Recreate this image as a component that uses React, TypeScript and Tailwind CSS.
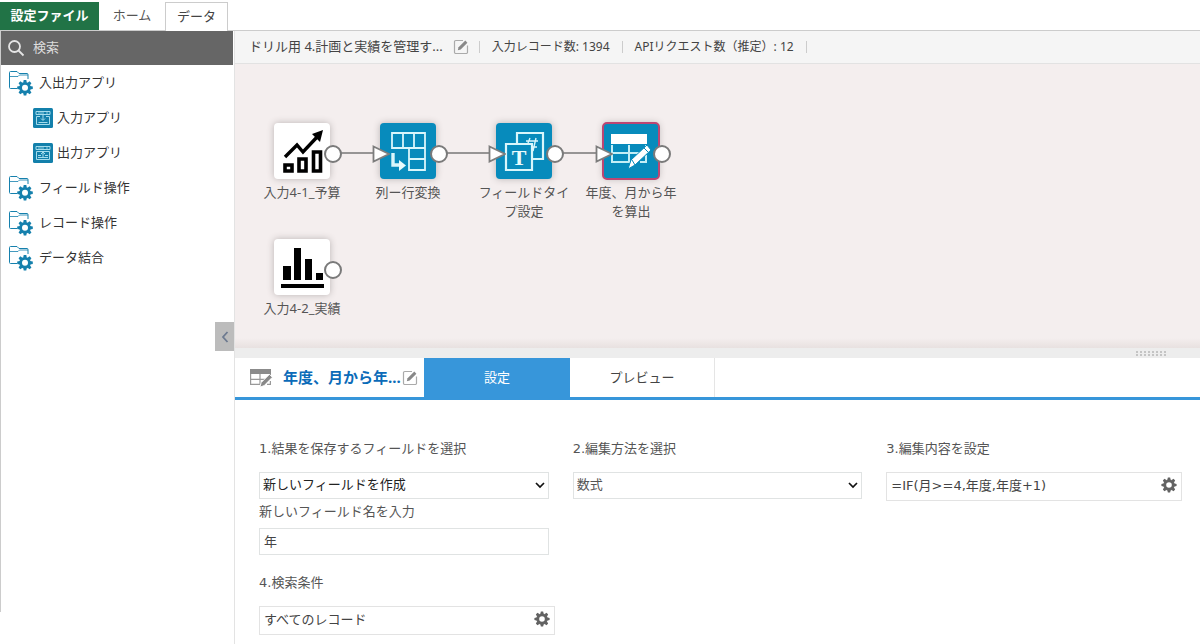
import { useState } from 'react';
import type { ReactNode } from 'react';

const TEETH = [0, 45, 90, 135, 180, 225, 270, 315];

function Gear({ className }: { className?: string }) {
  return (
    <svg viewBox="0 0 16 16" className={className} fill="currentColor" aria-hidden="true">
      {TEETH.map((angle) => (
        <path key={angle} d="M6.2 3.2 L6.9 0.4 H9.1 L9.800 3.2 Z" transform={`rotate(${angle} 8 8)`} />
      ))}
      <circle cx="8" cy="8" r="4.2" fill="none" stroke="currentColor" strokeWidth="2.800" />
    </svg>
  );
}

function FolderIcon() {
  return (
    <svg viewBox="0 0 24 26" className="h-[26px] w-6 shrink-0 text-[#1580ad]" fill="none" stroke="currentColor" aria-hidden="true">
      <path d="M8 18.500H1.500a1 1 0 0 1-1-1V2.500a1 1 0 0 1 1-1H8l2 2h8a1 1 0 0 1 1 1V9" />
      <path d="M0.500 6.500H9l1.500-1.500H19" strokeWidth="0.8" />
      <g transform="translate(8.2 10)" fill="currentColor" stroke="none">
        {TEETH.map((angle) => (
          <path key={angle} d="M6 2.8 L6.500 0 H9.100 L9.600 2.8 Z" transform={`rotate(${angle} 7.8 7.8)`} />
        ))}
        <circle cx="7.8" cy="7.8" r="4.400" fill="none" stroke="currentColor" strokeWidth="2.800" />
      </g>
    </svg>
  );
}

function AppIcon({ output }: { output?: boolean }) {
  return (
    <svg viewBox="0 0 20 20" className="size-5 shrink-0" aria-hidden="true">
      <rect width="20" height="20" rx="1.500" fill="#1380ab" />
      <g fill="none" stroke="#a5dcec">
        <path d="M3 3.500h14v3H3z" />
        <path d="M5 5h6M13 5h2" strokeWidth="0.8" />
        {output ? (
          <>
            <path d="M3.500 8.500h13v8h-13z" />
            <path d="M10 14V9M8 11l2-2 2 2M5 12.500h3M12 12.500h3M5 14.500h10" />
          </>
        ) : (
          <>
            <path d="M7 8.500H3.500v8h13v-8H13" />
            <path d="M10 7v5M8 10.500l2 2 2-2M5.500 14.500h9" />
          </>
        )}
      </g>
    </svg>
  );
}

function EditIcon() {
  return (
    <svg viewBox="0 0 16 16" className="size-4" fill="none" aria-hidden="true">
      <path d="M10 1.500H2.800a1.300 1.300 0 0 0-1.300 1.300v10.400a1.300 1.300 0 0 0 1.300 1.300h10.400a1.300 1.300 0 0 0 1.300-1.300V6.500" stroke="#aaa" strokeWidth="1.200" />
      <path d="M4.800 11.200l.8-2.900L12.300 1.600l2.100 2.100-6.700 6.700z" fill="#888" />
    </svg>
  );
}

function TablePencilIcon({ className }: { className?: string }) {
  return (
    <svg viewBox="0 0 24 20" className={className} aria-hidden="true">
      <path d="M1 1h21v5H1z" fill="#8b8b8b" />
      <path d="M1.600 6v10.400H11M1.600 11.400H16M11 6v10M21.400 6v2.500M18 16.400h3.400V13" stroke="#999" strokeWidth="1.200" fill="none" />
      <path d="M11 19l1.200-4.400L20.400 6.400l2.900 2.900-8.100 8.300z" fill="#888" stroke="#fff" strokeWidth="0.8" />
    </svg>
  );
}

const growthArt = (
  <g fill="none" stroke="#000">
    <path d="M11 34L23 22l6 7L44 13" strokeWidth="3.400" />
    <path d="M49 7l-3 12-8-8z" fill="#000" stroke="none" />
    <path d="M11 42h7v6h-7zM25 36h7v12h-7zM39.500 29h7v19h-7z" strokeWidth="3.600" />
  </g>
);

const barsArt = (
  <g fill="#000">
    <path d="M9 27h8v14H9zM20 9h7v32h-7zM31 20h7v21h-7zM42 34h7v7h-7zM7 45h43v4H7z" />
  </g>
);

const pivotArt = (
  <g fill="none" stroke="#d9f6fb" strokeWidth="1.800">
    <path d="M12 10h33v37H29V25H12zM23 10v15M34 10v15M29 25h16M29 36h16" />
    <path d="M13 30v12h8" strokeWidth="3.400" />
    <path d="M19 37l7 5.500-7 5.500z" fill="#e8fbfd" stroke="none" />
  </g>
);

const typeArt = (
  <g fill="none" stroke="#d9f6fb" strokeWidth="2.200">
    <path d="M21 20V10h26v26H37" />
    <path d="M10 21h26v26H10z" />
    <path d="M34 15l-2 5M40 15l-3 13M30 18h12M37 24h4" strokeWidth="1.400" />
    <text x="23" y="42" textAnchor="middle" fontSize="22" fontWeight="700" fill="#e8fbfd" stroke="none" className="font-['Liberation_Serif',serif]">
      T
    </text>
  </g>
);

const editTableArt = (
  <g fill="none" stroke="#c4eef6" strokeWidth="2">
    <path d="M8 11h36v10H8z" fill="#fff" stroke="none" />
    <path d="M9 22v17h18M9 30h29M26 22v17M43 22v3M37 39h6v-7" />
    <path d="M25 46l3-9 16-15 4 5-16 15z" fill="#fff" stroke="#078bbc" strokeWidth="1" />
    <path d="M29 37l3 5M41 25l4 4" stroke="#078bbc" strokeWidth="1" />
  </g>
);

interface FlowNode {
  label: string;
  place: string;
  tile: string;
  art: ReactNode;
  hasInput?: boolean;
}

const nodes: FlowNode[] = [
  { label: '入力4-1_予算', place: 'left-[19px] top-[59px]', tile: 'bg-white', art: growthArt },
  { label: '列ー行変換', place: 'left-[125px] top-[59px]', tile: 'bg-[#078bbc]', art: pivotArt, hasInput: true },
  { label: 'フィールドタイプ設定', place: 'left-[241px] top-[59px]', tile: 'bg-[#078bbc]', art: typeArt, hasInput: true },
  {
    label: '年度、月から年を算出',
    place: 'left-[348px] top-[59px]',
    tile: 'bg-[#078bbc] outline-2 -outline-offset-1 outline-[#bd4672]',
    art: editTableArt,
    hasInput: true,
  },
  { label: '入力4-2_実績', place: 'left-[19px] top-[175px]', tile: 'bg-white', art: barsArt },
];

function CanvasNode({ label, place, tile, art, hasInput }: FlowNode) {
  return (
    <div className={`absolute flex w-24 flex-col items-center ${place}`}>
      <button type="button" aria-label={label} className={`relative size-14 rounded-sm shadow-[0_0_7px_#b9b3b3] ${tile}`}>
        <svg viewBox="0 0 56 56" className="size-14">
          {art}
        </svg>
        {hasInput && (
          <svg viewBox="0 0 18 18" className="absolute top-[22px] -left-2 size-[18px]">
            <path d="M1.500 1.500L17 9 1.500 16.500z" fill="#fff" stroke="#7d7d7d" strokeWidth="1.800" />
          </svg>
        )}
        <span className="absolute top-[22px] -right-3 size-[18px] rounded-full border-2 border-[#7a7a7a] bg-white" />
      </button>
      <span className="mt-1 px-px text-center leading-[19px] text-[#555]">{label}</span>
    </div>
  );
}

const tree = [
  { label: '入出力アプリ', kind: 'folder' },
  { label: '入力アプリ', kind: 'input' },
  { label: '出力アプリ', kind: 'output' },
  { label: 'フィールド操作', kind: 'folder' },
  { label: 'レコード操作', kind: 'folder' },
  { label: 'データ結合', kind: 'folder' },
];

function Sidebar() {
  return (
    <aside className="relative flex w-[235px] shrink-0 border-r border-[#e3e3e3]">
      <div className="mb-8 flex-1 border-l border-[#ccc]">
        <label className="mr-px flex h-[34px] items-center bg-[#666] text-[#ddd]">
          <svg viewBox="0 0 18 18" className="ml-1.5 size-[18px]" fill="none" stroke="#e5e5e5" strokeWidth="1.800" aria-hidden="true">
            <circle cx="7.500" cy="7.500" r="5.500" />
            <path d="M11.500 11.500l5 5" />
          </svg>
          <input type="text" aria-label="検索" placeholder="検索" className="ml-2 w-40 bg-transparent outline-none placeholder:text-[#ddd]" />
        </label>
        <ul>
          {tree.map(({ label, kind }) => (
            <li key={label}>
              <button
                type="button"
                className={`flex h-[35px] w-full items-center text-[#333] ${kind === 'folder' ? 'gap-1.5 pl-2' : 'gap-1 pl-8'}`}
              >
                {kind === 'folder' ? <FolderIcon /> : <AppIcon output={kind === 'output'} />}
                {label}
              </button>
            </li>
          ))}
        </ul>
      </div>
      <button type="button" aria-label="閉じる" className="absolute top-[291px] right-0 flex h-[29px] w-[19px] items-center justify-center bg-[#bcbcbc]">
        <svg viewBox="0 0 8 12" className="h-3 w-2" fill="none" stroke="#6d7a90" strokeWidth="1.800">
          <path d="M6.500 1L2 6l4.500 5" />
        </svg>
      </button>
    </aside>
  );
}

function SelectField({ id, label, options, tone }: { id: string; label: string; options: string[]; tone: string }) {
  return (
    <div className="pr-6">
      <label htmlFor={id} className="block leading-5">{label}</label>
      <div className="relative mt-[13px]">
        <select id={id} className={`h-[27px] w-full appearance-none border border-[#e0e3e3] bg-white pb-0.5 pl-[3px] outline-none ${tone}`}>
          {options.map((option) => (
            <option key={option}>{option}</option>
          ))}
        </select>
        <svg viewBox="0 0 10 7" className="pointer-events-none absolute top-2.5 right-1 h-[7px] w-2.5" fill="none" stroke="#111" strokeWidth="1.700">
          <path d="M1 1l4 4 4-4" />
        </svg>
      </div>
    </div>
  );
}

function GearField({ id, label, value, onChange }: { id: string; label: string; value: string; onChange: (value: string) => void }) {
  return (
    <div className="pr-[18px]">
      <label htmlFor={id} className="block leading-5">{label}</label>
      <div className="mt-[13px] flex h-[29px] items-center border border-[#e3e3e3] pr-1 pb-0.5">
        <input
          id={id}
          type="text"
          value={value}
          onChange={(e) => onChange(e.target.value)}
          className="min-w-0 flex-1 pl-1 text-[#444] outline-none"
        />
        <button type="button" aria-label="設定を開く" className="mb-0.5 text-[#636363]">
          <Gear className="size-4" />
        </button>
      </div>
    </div>
  );
}

function SettingsForm() {
  const [fieldName, setFieldName] = useState('年');
  const [formula, setFormula] = useState('=IF(月>=4,年度,年度+1)');
  const [condition, setCondition] = useState('すべてのレコード');

  return (
    <form className="grid grid-cols-3 pt-[39px] pl-6 font-['DejaVu_Sans','Noto_Sans_CJK_JP',sans-serif] text-[#555]">
      <div>
        <SelectField id="target" label="1.結果を保存するフィールドを選択" options={['新しいフィールドを作成']} tone="text-[#222]" />
        <div className="pt-[3px] pr-6">
          <label htmlFor="field-name" className="block leading-5">新しいフィールド名を入力</label>
          <input
            id="field-name"
            type="text"
            value={fieldName}
            onChange={(e) => setFieldName(e.target.value)}
            className="mt-1.5 block h-[27px] w-full border border-[#e0e3e3] px-1 pb-0.5 text-[#444] outline-none"
          />
        </div>
        <div className="pt-[18px]">
          <GearField id="condition" label="4.検索条件" value={condition} onChange={setCondition} />
        </div>
      </div>
      <SelectField id="method" label="2.編集方法を選択" options={['数式']} tone="text-[#555]" />
      <GearField id="formula" label="3.編集内容を設定" value={formula} onChange={setFormula} />
    </form>
  );
}

export default function App() {
  return (
    <div className="flex min-h-screen flex-col bg-white font-['Noto_Sans','Noto_Sans_CJK_JP',sans-serif] text-[13px]">
      <nav className="flex h-[31px] items-stretch border-b border-[#ccc] pt-0.5">
        <button type="button" className="w-[99px] bg-[#217346] font-bold text-white">設定ファイル</button>
        <button type="button" className="w-[66px] text-[#555]">ホーム</button>
        <button type="button" className="-mb-px w-[63px] border border-b-0 border-[#ccc] bg-white text-[#444]">データ</button>
      </nav>

      <div className="flex flex-1">
        <Sidebar />

        <main className="flex min-w-0 flex-1 flex-col">
          <header className="flex h-[33px] items-center border-b border-[#e2e2e2] bg-[#f5f5f5] text-[#444]">
            <span className="pl-3.5 whitespace-nowrap">ドリル用 4.計画と実績を管理す...</span>
            <button type="button" aria-label="名前を編集" className="ml-2.5">
              <EditIcon />
            </button>
            <ul className="ml-2.5 flex divide-x divide-[#ccc] border-x border-[#ccc] text-xs leading-3">
              <li className="px-3">入力レコード数: 1394</li>
              <li className="px-3">APIリクエスト数（推定）: 12</li>
            </ul>
          </header>

          <section className="relative h-[284px] bg-[#f4eeee]">
            <svg className="absolute inset-0 size-full" stroke="#777" strokeWidth="1.500">
              <path d="M105 89h35M212 89h45M328 89h35" />
            </svg>
            {nodes.map((node) => (
              <CanvasNode key={node.label} {...node} />
            ))}
            <div className="absolute inset-x-0 bottom-0 h-2.5 bg-linear-to-b from-transparent to-[#e8e1e0]" />
          </section>

          <div className="flex h-2.5 items-center justify-end bg-[#ededed] pr-[34px]">
            <div className="grid grid-cols-8 gap-x-0.5 gap-y-px">
              {Array.from({ length: 16 }, (_, i) => (
                <span key={i} className="size-0.5 bg-[#c4c4c4]" />
              ))}
            </div>
          </div>

          <div className="flex h-[42px] items-stretch border-b-3 border-[#3796da]">
            <div className="flex w-[189px] items-center pl-3.5">
              <TablePencilIcon className="h-5 w-6 shrink-0" />
              <h2 className="ml-2.5 text-[15px] font-bold whitespace-nowrap text-[#0b6bb8]">年度、月から年...</h2>
              <button type="button" aria-label="ノード名を編集" className="ml-px">
                <EditIcon />
              </button>
            </div>
            <button type="button" className="w-[146px] bg-[#3796da] text-white">設定</button>
            <button type="button" className="w-[145px] border-r border-[#e5e5e5] text-[#444]">プレビュー</button>
          </div>

          <SettingsForm />
        </main>
      </div>
    </div>
  );
}
